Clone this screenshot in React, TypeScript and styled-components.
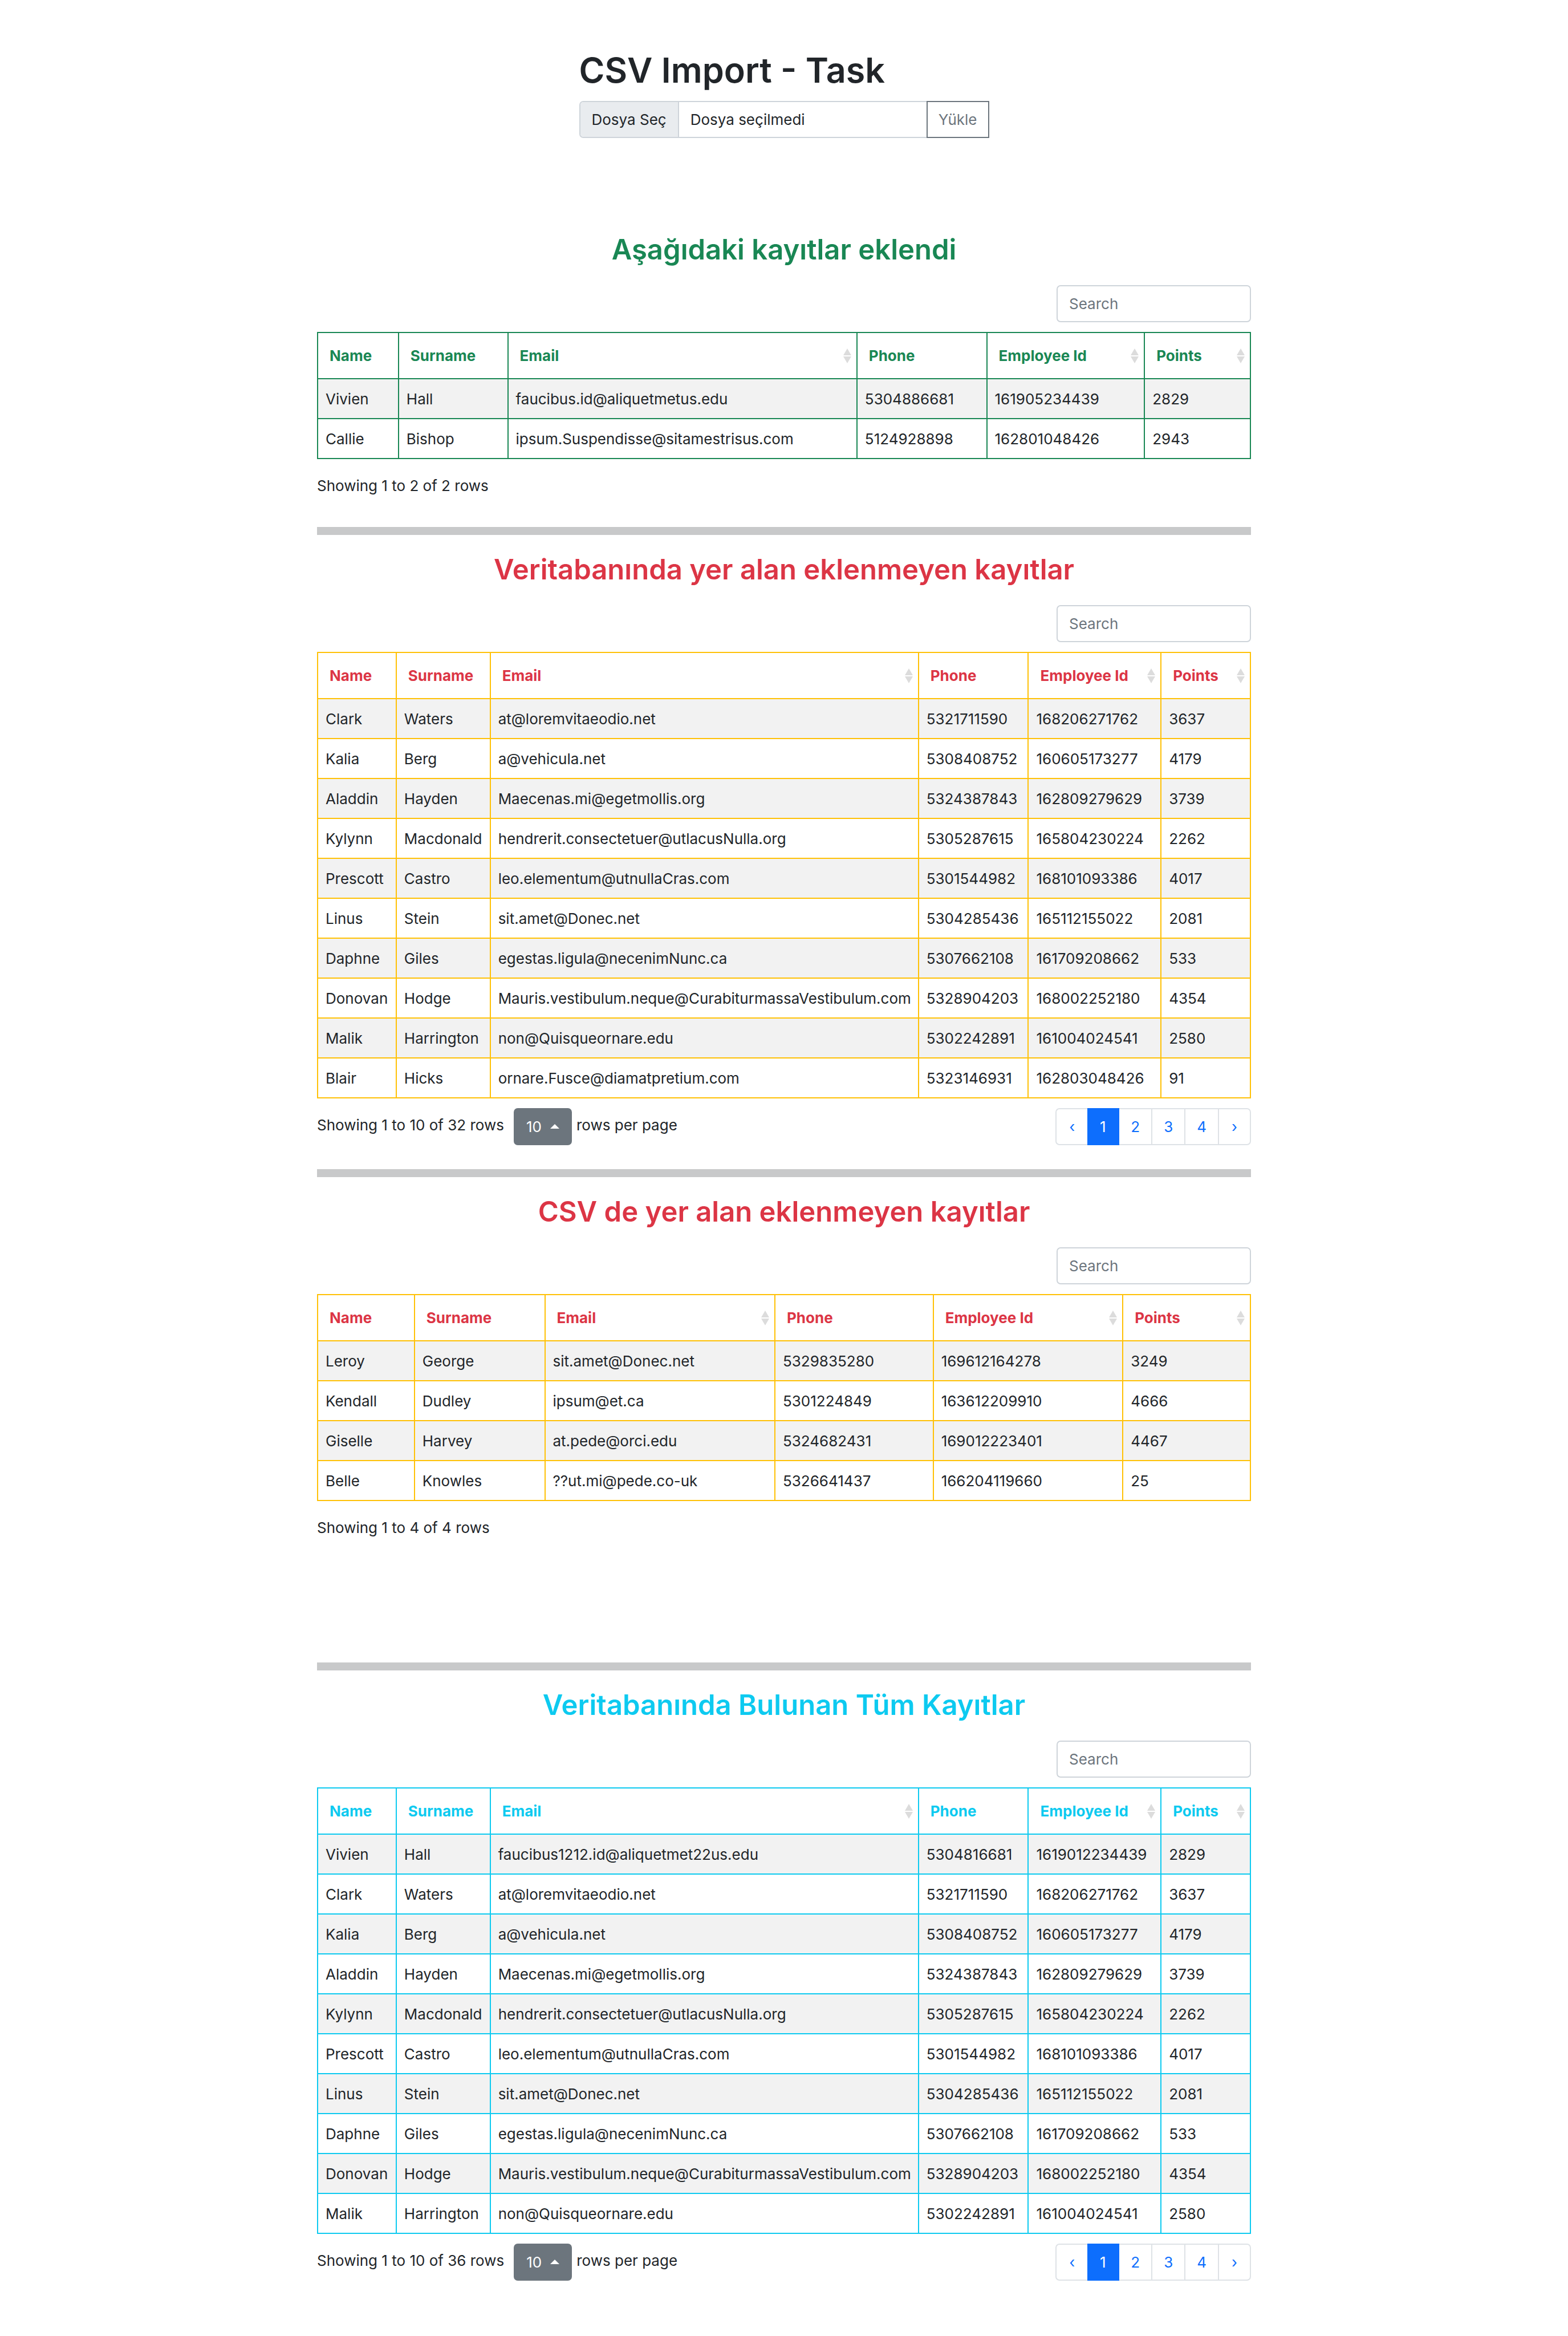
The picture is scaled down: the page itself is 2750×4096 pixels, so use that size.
import React, { useId } from "react";
import styled, { createGlobalStyle } from "styled-components";

const GlobalStyle = createGlobalStyle`
  *, *::before, *::after { box-sizing: border-box; }
  body {
    margin: 0;
    background: #fff;
    color: #212529;
    font-family: Inter, "Liberation Sans", sans-serif;
    font-size: 26px;
    line-height: 41px;
  }
  input, select, button { font: inherit; }
`;

const Page = styled.main`
  width: 100%;
  max-width: 1638px;
  margin: 0 auto;
  padding: 81px 0 83px;
`;

const Importer = styled.form`
  width: 719px;
  max-width: 100%;
  margin: 0 auto 162px;
`;

const PageTitle = styled.h1`
  margin: 0 0 12px;
  font-size: 61px;
  font-weight: 600;
  line-height: 84px;
`;

const FileGroup = styled.div`
  position: relative;
  display: flex;
  height: 65px;
`;

const FileInput = styled.input`
  position: absolute;
  width: 1px;
  height: 1px;
  opacity: 0;
`;

const FileLabel = styled.label`
  display: flex;
  flex: 1;
  border: 2px solid #ced4da;
  border-right: 0;
  border-radius: 7px 0 0 7px;
  overflow: hidden;
  line-height: 61px;
  cursor: pointer;
`;

const FileButton = styled.span`
  padding: 0 20px;
  background: #e9ecef;
  border-right: 2px solid #ced4da;
`;

const FileName = styled.span`
  flex: 1;
  padding: 0 20px;
`;

const UploadButton = styled.button`
  padding: 0 19px;
  border: 2px solid #6c757d;
  border-radius: 0;
  background: #fff;
  color: #6c757d;
  cursor: pointer;
`;

const Section = styled.section<{ $space?: number }>`
  padding-bottom: ${(p) => p.$space ?? 0}px;
`;

const SectionTitle = styled.h2<{ $color: string }>`
  margin: 0 0 12px;
  color: ${(p) => p.$color};
  font-size: 49px;
  font-weight: 600;
  line-height: 67px;
  text-align: center;
`;

const Toolbar = styled.div`
  display: flex;
  justify-content: flex-end;
  padding: 17px 0;
`;

const SearchInput = styled.input`
  width: 341px;
  height: 65px;
  padding: 0 20px;
  border: 2px solid #ced4da;
  border-radius: 7px;
  background: #fff;
  color: #212529;
  &::placeholder { color: #6c757d; opacity: 1; }
`;

const Table = styled.table<{ $line: string }>`
  width: 100%;
  border-collapse: collapse;
  table-layout: fixed;
  th, td { border: 2px solid ${(p) => p.$line}; }
`;

const HeadCell = styled.th<{ $color: string }>`
  height: 81px;
  padding: 0;
  color: ${(p) => p.$color};
  font-weight: 700;
  text-align: left;
`;

const HeadInner = styled.div`
  display: flex;
  align-items: center;
  justify-content: space-between;
  padding: 0 9px 0 20px;
  white-space: nowrap;
`;

const BodyRow = styled.tr`
  height: 70px;
  &:nth-child(odd) { background: #f2f2f2; }
`;

const Cell = styled.td`
  padding: 0 0 0 13px;
  white-space: nowrap;
`;

const Footer = styled.div`
  display: flex;
  align-items: flex-start;
  justify-content: space-between;
  padding: 17px 0 15px;
`;

const Detail = styled.div`
  display: flex;
  align-items: flex-start;
  line-height: 60px;
`;

const PageSize = styled.div`
  position: relative;
  display: flex;
  margin: 0 8px 0 17px;
`;

const PageSizeSelect = styled.select`
  appearance: none;
  width: 102px;
  height: 65px;
  padding: 0 20px;
  border: 2px solid #6c757d;
  border-radius: 7px;
  background: #6c757d;
  color: #fff;
  line-height: 61px;
`;

const Caret = styled.svg`
  position: absolute;
  top: 28px;
  right: 22px;
  pointer-events: none;
`;

const Pager = styled.nav`
  display: flex;
  height: 65px;
`;

const PageLink = styled.a<{ $active?: boolean }>`
  min-width: 56px;
  padding: 0 20px;
  border: 2px solid ${(p) => (p.$active ? "#0d6efd" : "#dee2e6")};
  background: ${(p) => (p.$active ? "#0d6efd" : "#fff")};
  color: ${(p) => (p.$active ? "#fff" : "#0d6efd")};
  line-height: 61px;
  text-align: center;
  text-decoration: none;
  & + & { border-left: 0; }
  &:first-child { border-radius: 7px 0 0 7px; border-right: 0; }
  &:last-child { border-radius: 0 7px 7px 0; }
`;

const Rule = styled.hr`
  height: 14px;
  margin: 27px 0;
  border: 0;
  background: #c8c9ca;
`;

type Row = string[];

const COLUMNS = [
  { title: "Name", sortable: false },
  { title: "Surname", sortable: false },
  { title: "Email", sortable: true },
  { title: "Phone", sortable: false },
  { title: "Employee Id", sortable: true },
  { title: "Points", sortable: true },
];

const added: Row[] = [
  ["Vivien", "Hall", "faucibus.id@aliquetmetus.edu", "5304886681", "161905234439", "2829"],
  ["Callie", "Bishop", "ipsum.Suspendisse@sitamestrisus.com", "5124928898", "162801048426", "2943"],
];

const existing: Row[] = [
  ["Clark", "Waters", "at@loremvitaeodio.net", "5321711590", "168206271762", "3637"],
  ["Kalia", "Berg", "a@vehicula.net", "5308408752", "160605173277", "4179"],
  ["Aladdin", "Hayden", "Maecenas.mi@egetmollis.org", "5324387843", "162809279629", "3739"],
  ["Kylynn", "Macdonald", "hendrerit.consectetuer@utlacusNulla.org", "5305287615", "165804230224", "2262"],
  ["Prescott", "Castro", "leo.elementum@utnullaCras.com", "5301544982", "168101093386", "4017"],
  ["Linus", "Stein", "sit.amet@Donec.net", "5304285436", "165112155022", "2081"],
  ["Daphne", "Giles", "egestas.ligula@necenimNunc.ca", "5307662108", "161709208662", "533"],
  ["Donovan", "Hodge", "Mauris.vestibulum.neque@CurabiturmassaVestibulum.com", "5328904203", "168002252180", "4354"],
  ["Malik", "Harrington", "non@Quisqueornare.edu", "5302242891", "161004024541", "2580"],
  ["Blair", "Hicks", "ornare.Fusce@diamatpretium.com", "5323146931", "162803048426", "91"],
];

const rejected: Row[] = [
  ["Leroy", "George", "sit.amet@Donec.net", "5329835280", "169612164278", "3249"],
  ["Kendall", "Dudley", "ipsum@et.ca", "5301224849", "163612209910", "4666"],
  ["Giselle", "Harvey", "at.pede@orci.edu", "5324682431", "169012223401", "4467"],
  ["Belle", "Knowles", "??ut.mi@pede.co-uk", "5326641437", "166204119660", "25"],
];

const all: Row[] = [
  ["Vivien", "Hall", "faucibus1212.id@aliquetmet22us.edu", "5304816681", "1619012234439", "2829"],
  ...existing.slice(0, 9),
];

const NARROW = [142, 192, 613, 228, 277, 186];
const WIDE = [138, 165, 752, 193, 233, 157];
const EVEN = [170, 229, 404, 278, 333, 224];

function SortIcon() {
  return (
    <svg width="14" height="26" viewBox="0 0 14 26" fill="#dcdcdc" aria-hidden="true">
      <path d="M7 0 14 12H0zM7 26 0 14H14z" />
    </svg>
  );
}

interface RecordsProps {
  title: string;
  color: string;
  line: string;
  widths: number[];
  rows: Row[];
  summary: string;
  paged?: boolean;
  space?: number;
}

function Records({ title, color, line, widths, rows, summary, paged, space }: RecordsProps) {
  const id = useId();
  const total = widths.reduce((a, b) => a + b, 0);
  return (
    <Section $space={space}>
      <SectionTitle $color={color}>{title}</SectionTitle>
      <Toolbar>
        <SearchInput type="search" placeholder="Search" aria-label="Search" />
      </Toolbar>
      <Table $line={line}>
        <colgroup>
          {widths.map((w, i) => (
            <col key={i} style={{ width: `${(w / total) * 100}%` }} />
          ))}
        </colgroup>
        <thead>
          <tr>
            {COLUMNS.map((c) => (
              <HeadCell key={c.title} $color={color} scope="col">
                <HeadInner>
                  {c.title}
                  {c.sortable && <SortIcon />}
                </HeadInner>
              </HeadCell>
            ))}
          </tr>
        </thead>
        <tbody>
          {rows.map((r) => (
            <BodyRow key={r[4]}>
              {r.map((v, i) => (
                <Cell key={i}>{v}</Cell>
              ))}
            </BodyRow>
          ))}
        </tbody>
      </Table>
      <Footer>
        <Detail>
          <span>{summary}</span>
          {paged && (
            <>
              <PageSize>
                <PageSizeSelect id={id} defaultValue="10">
                  <option>10</option>
                  <option>25</option>
                  <option>50</option>
                </PageSizeSelect>
                <Caret width="16" height="8" viewBox="0 0 16 8" fill="#fff" aria-hidden="true">
                  <path d="M8 0 16 8H0z" />
                </Caret>
              </PageSize>
              <label htmlFor={id}>rows per page</label>
            </>
          )}
        </Detail>
        {paged && (
          <Pager aria-label={title}>
            <PageLink href="#prev">‹</PageLink>
            <PageLink href="#1" $active>1</PageLink>
            <PageLink href="#2">2</PageLink>
            <PageLink href="#3">3</PageLink>
            <PageLink href="#4">4</PageLink>
            <PageLink href="#next">›</PageLink>
          </Pager>
        )}
      </Footer>
    </Section>
  );
}

export default function App() {
  return (
    <>
      <GlobalStyle />
      <Page>
        <Importer onSubmit={(e) => e.preventDefault()}>
          <PageTitle>CSV Import - Task</PageTitle>
          <FileGroup>
            <FileInput type="file" id="csv" accept=".csv" />
            <FileLabel htmlFor="csv">
              <FileButton>Dosya Seç</FileButton>
              <FileName>Dosya seçilmedi</FileName>
            </FileLabel>
            <UploadButton type="submit">Yükle</UploadButton>
          </FileGroup>
        </Importer>
        <Records
          title="Aşağıdaki kayıtlar eklendi"
          color="#198754"
          line="#198754"
          widths={NARROW}
          rows={added}
          summary="Showing 1 to 2 of 2 rows"
        />
        <Rule />
        <Records
          title="Veritabanında yer alan eklenmeyen kayıtlar"
          color="#dc3545"
          line="#ffc107"
          widths={WIDE}
          rows={existing}
          summary="Showing 1 to 10 of 32 rows"
          paged
        />
        <Rule />
        <Records
          title="CSV de yer alan eklenmeyen kayıtlar"
          color="#dc3545"
          line="#ffc107"
          widths={EVEN}
          rows={rejected}
          summary="Showing 1 to 4 of 4 rows"
          space={164}
        />
        <Rule />
        <Records
          title="Veritabanında Bulunan Tüm Kayıtlar"
          color="#0dcaf0"
          line="#0dcaf0"
          widths={WIDE}
          rows={all}
          summary="Showing 1 to 10 of 36 rows"
          paged
        />
      </Page>
    </>
  );
}
